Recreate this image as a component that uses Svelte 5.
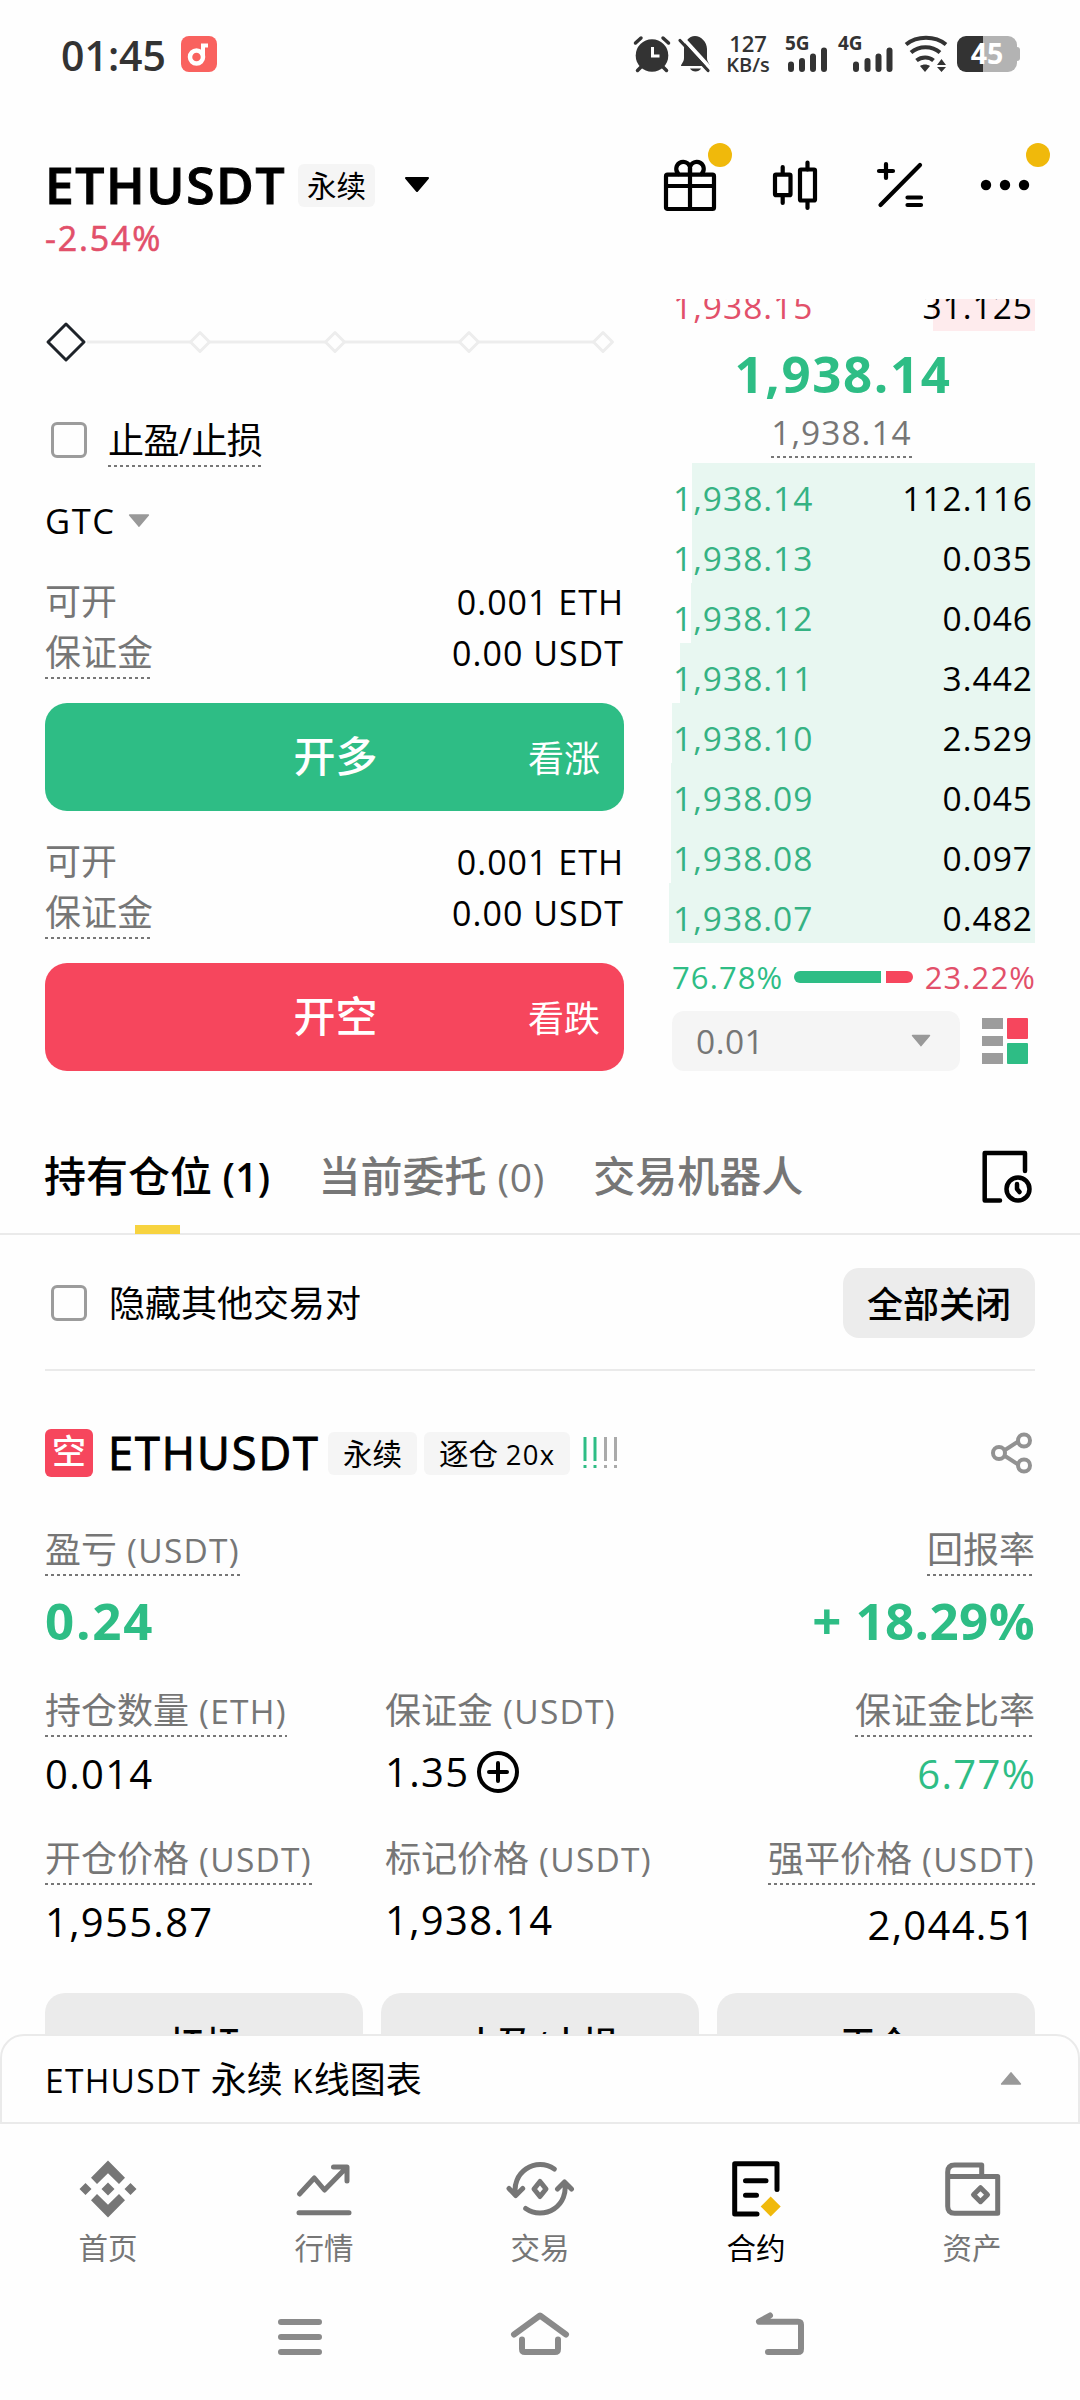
<script>
    const asks = [{ price: '1,938.15', amount: '31.125', depth: 102 }];

    const bids = [
        { price: '1,938.14', amount: '112.116', depth: 343 },
        { price: '1,938.13', amount: '0.035', depth: 343 },
        { price: '1,938.12', amount: '0.046', depth: 344 },
        { price: '1,938.11', amount: '3.442', depth: 355 },
        { price: '1,938.10', amount: '2.529', depth: 363 },
        { price: '1,938.09', amount: '0.045', depth: 364 },
        { price: '1,938.08', amount: '0.097', depth: 364 },
        { price: '1,938.07', amount: '0.482', depth: 366 }
    ];

    const sides = [
        { type: 'long', title: '开多', hint: '看涨', available: '0.001 ETH', margin: '0.00 USDT' },
        { type: 'short', title: '开空', hint: '看跌', available: '0.001 ETH', margin: '0.00 USDT' }
    ];

    const tabs = [
        { name: '持有仓位', count: '(1)' },
        { name: '当前委托', count: '(0)' },
        { name: '交易机器人', count: '' }
    ];

    const actions = ['杠杆', '止盈/止损', '平仓'];
    const sliderStops = [155, 290, 424, 558];
    const ratio = { buy: 76.78, sell: 23.22 };
</script>

{#snippet caret(cls)}
    <svg class="caret {cls}" viewBox="0 0 26 16"><path d="M2 1h22l-11 13z" stroke-width="2" stroke-linejoin="round" /></svg>
{/snippet}

{#snippet label(text, unit, dotted)}
    <span class="label" class:dotted>{text}{#if unit}<span class="en">&nbsp;({unit})</span>{/if}</span>
{/snippet}

{#snippet bookRow(row, side)}
    <div class="book-row {side}">
        <div class="depth" style="width: {row.depth}px"></div>
        <span class="price">{row.price}</span>
        <span class="amount">{row.amount}</span>
    </div>
{/snippet}

<div class="screen">
    <div class="status">
        <span class="time">01:45</span>
        <svg class="app-badge" width="36" height="36" viewBox="0 0 36 36">
            <rect width="36" height="36" rx="8" fill="#f9625f" />
            <circle cx="15.500" cy="21" r="6.500" fill="none" stroke="#fff" stroke-width="4.500" />
            <path d="M22 21V9.500h5" fill="none" stroke="#fff" stroke-width="4" />
        </svg>
        <div class="status-icons">
            <svg width="36" height="36" viewBox="0 0 36 36">
                <path d="M8 30l-4.500 4.500M28 30l4.500 4.500M1.500 7l5.500-5M34.500 7l-5.500-5" stroke="#333" stroke-width="3.500" stroke-linecap="round" />
                <circle cx="18" cy="19.500" r="16.300" fill="#333" />
                <path d="M18.500 11v9h7" fill="none" stroke="#fff" stroke-width="3" />
            </svg>
            <svg class="bell" width="34" height="36" viewBox="0 0 34 36">
                <path d="M3 30c0-2 3-4 3-8v-9c0-7 5-13 11-13s12 6 12 13v9c0 4 3 6 3 8z" fill="#333" />
                <path d="M12 32.500h11c-2 4-9 4-11 0z" fill="#333" />
                <path d="M4 1l30 33" stroke="#fff" stroke-width="4" />
                <path d="M2 4.500l28 30" stroke="#333" stroke-width="3.200" stroke-linecap="round" />
            </svg>
            <div class="speed"><span>127</span><span>KB/s</span></div>
            <svg class="signal" width="43" height="36" viewBox="0 0 43 36">
                <text x="0" y="14">5G</text>
                <path d="M6 28.500v4.500M17 25v8M28 20.500v12.500M39 14.500v18.500" />
            </svg>
            <svg class="signal second" width="56" height="36" viewBox="0 0 56 36">
                <text x="0" y="14">4G</text>
                <path d="M18 28.500v4.500M29.500 25v8M40.500 20.500v12.500M51.500 14.500v18.500" />
            </svg>
            <svg class="wifi" width="46" height="36" viewBox="0 0 46 36">
                <path d="M3 8.500c11-9 29-9 40 0M8 16.500c8-7 21-7 29 0M13.500 24.500c5-4 12.500-4 17 0" fill="none" stroke="#333" stroke-width="4" />
                <path d="M17 30c3-2 7-2 10 0l-5 6zM34 29l4.500-6 4.500 6zM34 31h9l-4.500 5z" fill="#333" />
            </svg>
            <div class="battery">45</div>
        </div>
    </div>

    <header>
        <div class="pair">
            <div class="pair-line">
                <h1>ETHUSDT</h1>
                <span class="tag">永续</span>
                {@render caret('black')}
            </div>
            <div class="change">-2.54%</div>
        </div>
        <div class="tools">
            <div class="tool alert">
                <svg viewBox="0 0 56 56">
                    <rect x="4" y="17.700" width="48" height="34.300" rx="1.500" />
                    <path d="M4 29h48M28 11v41" />
                    <path d="M28 17V10a7 7 0 1 0-11.500 7M28 17V10a7 7 0 1 1 11.500 7" />
                </svg>
            </div>
            <div class="tool">
                <svg viewBox="0 0 56 56">
                    <rect x="8" y="17.700" width="15.500" height="20.500" rx="1" />
                    <rect x="33" y="12.500" width="15" height="31" rx="1" />
                    <path d="M15.700 10v7M15.700 39v7M40.500 5.500v7M40.500 44v7" />
                </svg>
            </div>
            <div class="tool">
                <svg viewBox="0 0 56 56"><path d="M8.500 48L48 8M7 14h14M14 7v14M35.500 40.500H49M35.500 48H49" /></svg>
            </div>
            <div class="tool alert">
                <svg viewBox="0 0 56 56" class="solid"><circle cx="9" cy="28" r="5.200" /><circle cx="28" cy="28" r="5.200" /><circle cx="47" cy="28" r="5.200" /></svg>
            </div>
        </div>
    </header>

    <section class="trade">
        <div class="order-form">
            <svg class="slider" width="579" height="86" viewBox="0 0 579 86">
                <path d="M42 43h516" stroke="#ededed" stroke-width="3" />
                {#each sliderStops as x}
                    <path d="M{x} 33.500l9.500 9.500l-9.500 9.500l-9.500-9.500z" fill="#fefefe" stroke="#ededed" stroke-width="3" stroke-linejoin="round" />
                {/each}
                <path d="M21 25l18 18l-18 18l-18-18z" fill="#fefefe" stroke="#1e2329" stroke-width="3" stroke-linejoin="round" />
            </svg>
            <div class="check-row">
                <span class="checkbox"></span>
                <span class="label dotted dark">止盈/止损</span>
            </div>
            <div class="tif">GTC {@render caret('small')}</div>

            {#each sides as side}
                <div class="side {side.type}">
                    <div class="info"><span class="plain">可开</span><b>{side.available}</b></div>
                    <div class="info"><span class="label dotted">保证金</span><b>{side.margin}</b></div>
                    <button class="order">
                        <span></span>
                        <span class="order-title">{side.title}</span>
                        <span class="order-hint">{side.hint}</span>
                    </button>
                </div>
            {/each}
        </div>

        <div class="book">
            <div class="asks">
                {#each asks as row}
                    {@render bookRow(row, 'ask')}
                {/each}
            </div>
            <div class="last">1,938.14</div>
            <div class="mark">1,938.14</div>
            {#each bids as row}
                {@render bookRow(row, 'bid')}
            {/each}
            <div class="ratio">
                <span class="up">{ratio.buy}%</span>
                <div class="ratio-bar">
                    <i class="buy" style="flex-grow: {ratio.buy}"></i>
                    <i class="sell" style="flex-grow: {ratio.sell}"></i>
                </div>
                <span class="down">{ratio.sell}%</span>
            </div>
            <div class="book-footer">
                <div class="step">0.01 {@render caret('tiny')}</div>
                <svg width="47" height="47" viewBox="0 0 47 47">
                    <path d="M0 0h21v11H0zM0 18h21v10H0zM0 35h21v11H0z" fill="#9c9c9c" />
                    <rect x="25" width="21" height="21" rx="1" fill="#f6465d" />
                    <rect x="25" y="25" width="21" height="21" rx="1" fill="#2ebd85" />
                </svg>
            </div>
        </div>
    </section>

    <nav class="tabs">
        {#each tabs as tab, i}
            <div class="tab" class:active={i === 0}>
                <span>{tab.name}{#if tab.count}<span class="en">&nbsp;{tab.count}</span>{/if}</span>
            </div>
        {/each}
        <svg class="history" width="56" height="56" viewBox="0 0 56 56">
            <path d="M46 22V4H5.700v47.500H21" />
            <circle cx="39" cy="40" r="11.500" />
            <path d="M38 35v5l2.500 3" />
        </svg>
    </nav>

    <div class="filter">
        <span class="checkbox"></span>
        <span class="filter-text">隐藏其他交易对</span>
        <button class="close-all">全部关闭</button>
    </div>

    <section class="position">
        <div class="position-head">
            <span class="badge">空</span>
            <h2>ETHUSDT</h2>
            <span class="tag">永续</span>
            <span class="tag">逐仓 <span class="en">20x</span></span>
            <svg class="risk" width="36" height="34" viewBox="0 0 36 34">
                <path d="M2 1v24M2 29v3M12 1v24M12 29v3" stroke="#2ebd85" stroke-width="3" />
                <path d="M22.500 1v24M22.500 29v3M32.500 1v24M32.500 29v3" stroke="#aaa" stroke-width="3" />
            </svg>
            <svg class="share" width="44" height="44" viewBox="0 0 44 44">
                <path d="M14 19l14-9M14 25l14 9" />
                <circle cx="8" cy="22" r="6" />
                <circle cx="33" cy="9.500" r="6" />
                <circle cx="33" cy="34.500" r="6" />
            </svg>
        </div>

        <div class="stats first">
            <div class="stat">{@render label('盈亏', 'USDT', true)}<strong class="pnl">0.24</strong></div>
            <div class="stat"></div>
            <div class="stat end">{@render label('回报率', '', true)}<strong>+ 18.29%</strong></div>
        </div>
        <div class="stats">
            <div class="stat">{@render label('持仓数量', 'ETH', true)}<em>0.014</em></div>
            <div class="stat mid">
                {@render label('保证金', 'USDT', false)}
                <em>1.35
                    <svg width="42" height="42" viewBox="0 0 42 42"><circle cx="21" cy="21" r="19" /><path d="M21 12v18M12 21h18" /></svg>
                </em>
            </div>
            <div class="stat end">{@render label('保证金比率', '', true)}<em class="up">6.77%</em></div>
        </div>
        <div class="stats">
            <div class="stat">{@render label('开仓价格', 'USDT', true)}<em>1,955.87</em></div>
            <div class="stat mid">{@render label('标记价格', 'USDT', false)}<em>1,938.14</em></div>
            <div class="stat end liq">{@render label('强平价格', 'USDT', true)}<em>2,044.51</em></div>
        </div>

        <div class="actions">
            {#each actions as action}
                <button>{action}</button>
            {/each}
        </div>
    </section>

    <div class="sheet">
        <span><span class="en">ETHUSDT</span> 永续 <span class="en">K</span>线图表</span>
        {@render caret('small flip')}
    </div>

    <nav class="bottom">
        <div class="item">
            <svg viewBox="0 0 60 60" class="solid">
                <path d="M30 1.500L47 18.700L41 25L30 14.300L19 25L13 18.700zM30 58.500L47 41.300L41 35L30 45.700L19 35L13 41.300z" />
                <path d="M30 23.500l6.500 6.500l-6.500 6.500l-6.500-6.500zM7.500 24l6 6l-6 6l-6-6zM52.500 24l6 6l-6 6l-6-6z" />
            </svg>
            <span>首页</span>
        </div>
        <div class="item">
            <svg viewBox="0 0 60 60"><path d="M5.500 35L20.300 19L30.500 31L52 9M39.500 8H53V22M5 53.700H55" /></svg>
            <span>行情</span>
        </div>
        <div class="item">
            <svg viewBox="0 0 60 60">
                <path d="M44.300 10A25 25 0 0 0 5.700 36M-1 29.500l6.700 7l7-7M15.700 49.500A25 25 0 0 0 54.500 23.500M47.500 30l7-7l7 7" />
                <path d="M30 22.500l6 7.500l-6 7.500l-6-7.500z" />
            </svg>
            <span>交易</span>
        </div>
        <div class="item current">
            <svg viewBox="0 0 60 60">
                <path d="M51 30.500V4.700H8.700V55H31M19.500 21.700H40M19.500 36.300H30.500" />
                <path class="gem" d="M44.700 37.500l10 10l-10 10l-10-10z" />
            </svg>
            <span>合约</span>
        </div>
        <div class="item">
            <svg viewBox="0 0 60 60">
                <path d="M5.700 17.500V13q0-7 7-7h27v11M5.700 17.500h50v36.800h-43q-7 0-7-7z" />
                <path d="M38.500 28.700l7 7l-7 7l-7-7z" />
            </svg>
            <span>资产</span>
        </div>
    </nav>

    <div class="system">
        <svg viewBox="0 0 60 50"><path d="M11 12h38M11 27h38M11 42h38" /></svg>
        <svg viewBox="0 0 60 50"><path d="M4 24.500L30 5.500L56 24.500M12 29.500V39q0 3 3 3h30q3 0 3-3V29.500" /></svg>
        <svg viewBox="0 0 60 50"><path d="M20 5.500L9 11.700H48q3 0 3 3V39q0 3-3 3H18" /></svg>
    </div>
</div>

<style>
    :global(body) {
        background: #fefefe;
    }

    .screen {
        width: 1080px;
        height: 2400px;
        overflow: hidden;
        display: flex;
        flex-direction: column;
        background: #fefefe;
        color: #000;
        font-family: "Open Sans", "Noto Sans CJK SC", sans-serif;
        font-size: 36px;
    }

    .screen * {
        box-sizing: border-box;
    }

    svg {
        display: block;
        flex: none;
        overflow: visible;
    }

    h1, h2 {
        margin: 0;
    }

    em {
        font-style: normal;
    }

    button {
        border: none;
        padding: 0;
        font-family: inherit;
    }

    .en {
        font-size: 0.93em;
        letter-spacing: 1.3px;
    }

    .up {
        color: #2ebd85;
    }

    .down {
        color: #e2506a;
    }

    .caret {
        width: 26px;
        height: 16px;
        fill: #999;
        stroke: #999;
    }

    .caret.black {
        fill: #000;
        stroke: #000;
        margin-left: 29px;
    }

    .caret.small {
        width: 22px;
        height: 14px;
    }

    .caret.tiny {
        width: 20px;
    }

    .caret.flip {
        transform: rotate(180deg);
    }

    /* status bar */
    .status {
        height: 108px;
        flex: none;
        display: flex;
        align-items: center;
        padding: 0 60px 0 61px;
        color: #333;
    }

    .time {
        font-size: 41px;
        font-weight: 600;
        line-height: 52px;
        width: 120px;
        padding-top: 2px;
    }

    .status-icons {
        margin-left: auto;
        display: flex;
        align-items: center;
    }

    .bell {
        margin-left: 8px;
    }

    .speed {
        display: flex;
        flex-direction: column;
        align-items: center;
        width: 42px;
        margin: 0 16px 0 15px;
        font-size: 22px;
        font-weight: 600;
        line-height: 22px;
    }

    .speed span:last-child {
        font-size: 20px;
    }

    .signal text {
        font-family: "Open Sans", sans-serif;
        font-size: 19px;
        font-weight: 700;
        fill: #333;
    }

    .signal path {
        stroke: #333;
        stroke-width: 6;
        stroke-linecap: round;
    }

    .signal.second {
        margin-left: 10px;
    }

    .wifi {
        margin: 0 8px 0 9px;
    }

    .battery {
        position: relative;
        width: 60px;
        height: 36px;
        margin-right: 3px;
        border-radius: 9px;
        background: linear-gradient(90deg, #333 44%, #b3b3b3 44%);
        color: #fff;
        font-size: 28.5px;
        font-weight: 700;
        line-height: 35px;
        text-align: center;
    }

    .battery::after {
        content: "";
        position: absolute;
        right: -3px;
        top: 11px;
        width: 3px;
        height: 14px;
        border-radius: 0 3px 3px 0;
        background: #b3b3b3;
    }

    /* header */
    header {
        height: 191px;
        flex: none;
        display: flex;
        justify-content: space-between;
        padding: 45px 47px 0 45px;
    }

    .pair-line {
        display: flex;
        align-items: center;
        height: 64px;
    }

    h1 {
        font-size: 51.5px;
        font-weight: 600;
        line-height: 62px;
        padding-bottom: 2px;
        width: 253px;
        letter-spacing: 1.6px;
        -webkit-text-stroke: 1px #000;
    }

    .tag {
        height: 43px;
        padding: 0 9px;
        border-radius: 6px;
        background: #f5f5f5;
        font-size: 29.5px;
        line-height: 43px;
        white-space: nowrap;
    }

    .change {
        color: #e2506a;
        font-size: 34px;
        font-weight: 500;
        line-height: 42px;
        letter-spacing: 1.8px;
        -webkit-text-stroke: 0.6px #e2506a;
    }

    .tools {
        display: flex;
        gap: 49px;
        padding-top: 4px;
    }

    .tool {
        position: relative;
        width: 56px;
        height: 56px;
    }

    .tool svg {
        fill: none;
        stroke: #000;
        stroke-width: 4.2;
        stroke-linecap: round;
        stroke-linejoin: round;
    }

    .tool svg.solid {
        fill: #000;
        stroke: none;
    }

    .tool.alert::after {
        content: "";
        position: absolute;
        right: -14px;
        top: -14px;
        width: 24px;
        height: 24px;
        border-radius: 50%;
        background: #f0b90b;
    }

    .tool.alert:last-child::after {
        right: -17px;
    }

    /* order form and order book */
    .trade {
        flex: none;
        display: grid;
        grid-template-columns: 579px 366px;
        gap: 45px;
        height: 772px;
        padding: 0 45px;
    }

    .check-row {
        display: flex;
        align-items: center;
        height: 110px;
        padding-left: 6px;
        gap: 21px;
    }

    .checkbox {
        width: 36px;
        height: 36px;
        border: 3px solid #9c9c9c;
        border-radius: 6px;
        flex: none;
    }

    .label {
        color: #767676;
        line-height: 48px;
        padding-bottom: 2px;
        white-space: nowrap;
    }

    .label.dark {
        color: #000;
        line-height: 50px;
        padding: 3px 0 1px;
        letter-spacing: -0.6px;
    }

    .dotted {
        background: repeating-linear-gradient(90deg, #777 0 3px, transparent 3px 6px) bottom / 100% 2px no-repeat;
    }

    .tif {
        display: flex;
        align-items: center;
        gap: 12px;
        height: 52px;
        padding-bottom: 1px;
        font-size: 34.5px;
        letter-spacing: 1.6px;
        margin-bottom: 30px;
    }

    .side {
        margin-bottom: 26px;
    }

    .info {
        display: flex;
        align-items: center;
        justify-content: space-between;
        height: 50px;
        color: #767676;
    }

    .info + .info {
        height: 52px;
    }

    .info .plain {
        padding-bottom: 6px;
    }

    .info .label {
        line-height: 51px;
        padding-bottom: 1px;
    }

    .info b {
        color: #000;
        font-size: 34px;
        font-weight: 400;
        letter-spacing: 1px;
        padding-bottom: 1px;
    }

    .order {
        width: 579px;
        height: 108px;
        margin-top: 24px;
        padding: 0 24px 0 26px;
        display: grid;
        grid-template-columns: 1fr auto 1fr;
        align-items: center;
        border-radius: 22px;
        background: #2ebd85;
        color: #fff;
    }

    .short .order {
        background: #f6465d;
    }

    .order-title {
        padding-bottom: 7px;
        font-size: 42px;
        font-weight: 500;
    }

    .order-hint {
        padding-bottom: 1px;
        font-size: 36px;
        text-align: right;
    }

    .asks {
        height: 32px;
        overflow: hidden;
        display: flex;
        flex-direction: column;
        justify-content: flex-end;
    }

    .book-row {
        position: relative;
        display: flex;
        justify-content: space-between;
        flex: none;
        height: 60px;
        padding: 10px 3px 0 4px;
        font-size: 33.5px;
        line-height: 50px;
        letter-spacing: 1px;
    }

    .depth {
        position: absolute;
        right: 0;
        top: 0;
        height: 60px;
        background: #e8f7f1;
    }

    .ask .depth {
        background: #feebed;
    }

    .price, .amount {
        position: relative;
    }

    .amount {
        margin-right: -1px;
    }

    .bid .price {
        color: #35b283;
    }

    .ask .price {
        color: #e2506a;
    }

    .last {
        color: #2ebd85;
        font-size: 51px;
        font-weight: 700;
        line-height: 84px;
        letter-spacing: 1.6px;
        text-align: center;
        padding-right: 18px;
        padding-bottom: 2px;
    }

    .mark {
        width: 141px;
        margin: 0 0 5px 102px;
        padding-bottom: 11px;
        color: #767676;
        font-size: 33.5px;
        line-height: 30px;
        letter-spacing: 1px;
        text-align: center;
        background: repeating-linear-gradient(90deg, #777 0 3px, transparent 3px 6px) bottom / 100% 2px no-repeat;
    }

    .ratio {
        display: flex;
        align-items: center;
        height: 68px;
        padding-left: 3px;
        font-size: 31px;
        letter-spacing: 1.1px;
    }

    .ratio .down {
        margin-right: -1px;
    }

    .ratio-bar {
        flex: 1;
        display: flex;
        gap: 5px;
        height: 12px;
        margin: 0 12px 0 11px;
    }

    .ratio-bar i {
        flex-basis: 0;
    }

    .buy {
        background: #2ebd85;
        border-radius: 6px 0 0 6px;
    }

    .sell {
        background: #f6465d;
        border-radius: 0 6px 6px 0;
    }

    .book-footer {
        display: flex;
        align-items: center;
        justify-content: space-between;
        padding: 0 6px 0 3px;
    }

    .step {
        display: flex;
        align-items: center;
        justify-content: space-between;
        width: 288px;
        height: 60px;
        padding: 0 29px 0 24px;
        border-radius: 12px;
        background: #f5f5f5;
        color: #767676;
        font-size: 33.5px;
        letter-spacing: 0.5px;
    }

    /* tabs */
    .tabs {
        flex: none;
        display: flex;
        height: 164px;
        padding: 80px 45px 0 44px;
        border-bottom: 2px solid #eaeaea;
    }

    .tab {
        margin-right: 48px;
        color: #767676;
        font-size: 42px;
        font-weight: 500;
        line-height: 50px;
        white-space: nowrap;
    }

    .tab .en {
        letter-spacing: 0.8px;
    }

    .tab.active {
        color: #000;
    }

    .tab.active .en {
        font-weight: 600;
        letter-spacing: 0.3px;
    }

    .tab.active::after {
        content: "";
        display: block;
        width: 45px;
        height: 9px;
        margin: 23px auto 0;
        background: #f7d33f;
    }

    .history {
        margin: -2px 0 0 auto;
        fill: none;
        stroke: #000;
        stroke-width: 4.5;
        stroke-linecap: round;
        stroke-linejoin: round;
    }

    .filter {
        flex: none;
        display: flex;
        align-items: center;
        height: 136px;
        margin: 0 45px;
        padding: 2px 0 0 6px;
        border-bottom: 2px solid #eaeaea;
    }

    .filter-text {
        margin-left: 22px;
        padding-top: 1px;
        line-height: 50px;
    }

    .close-all {
        width: 192px;
        height: 70px;
        margin-left: auto;
        padding-bottom: 2px;
        border-radius: 16px;
        background: #ececec;
        color: #000;
        font-size: 36px;
        font-weight: 500;
    }

    /* position card */
    .position {
        flex: none;
        height: 663px;
        overflow: hidden;
        padding: 0 45px;
    }

    .position-head {
        display: flex;
        align-items: center;
        height: 155px;
        padding-top: 9px;
    }

    .badge {
        width: 48px;
        height: 48px;
        border-radius: 6px;
        background: #f6465d;
        color: #fff;
        font-size: 34px;
        font-weight: 500;
        line-height: 45px;
        text-align: center;
    }

    h2 {
        width: 220px;
        margin-left: 15px;
        font-size: 45px;
        font-weight: 500;
        line-height: 56px;
        letter-spacing: 2px;
        -webkit-text-stroke: 1px #000;
    }

    .position-head .tag {
        padding: 0 15px;
        margin-right: 7px;
        font-size: 29.5px;
    }

    .risk {
        margin-left: 6px;
    }

    .share {
        margin-left: auto;
        fill: none;
        stroke: #929292;
        stroke-width: 4;
    }

    .stats {
        display: grid;
        grid-template-columns: 340px 1fr auto;
        margin-top: 36px;
    }

    .stats.first {
        margin: 0 0 -1px;
    }

    .stat {
        display: flex;
        flex-direction: column;
        align-items: flex-start;
    }

    .stat.end {
        align-items: flex-end;
    }

    .stat strong {
        margin-top: 14px;
        padding-bottom: 2px;
        color: #2ebd85;
        font-size: 51px;
        line-height: 60px;
        letter-spacing: 0.4px;
    }

    .stat .pnl {
        letter-spacing: 1.8px;
    }

    .stat em {
        display: flex;
        align-items: center;
        gap: 8px;
        margin-top: 12px;
        font-size: 40px;
        line-height: 50px;
        letter-spacing: 1.3px;
    }

    .stat.end em {
        margin-right: -1px;
    }

    .mid em {
        margin-top: 10px;
    }

    .liq em {
        margin: 15px 0 -3px;
    }

    .stat em svg {
        fill: none;
        stroke: #000;
        stroke-width: 4;
        stroke-linecap: round;
    }

    .actions {
        display: grid;
        grid-template-columns: repeat(3, 1fr);
        gap: 18px;
        margin-top: 46px;
    }

    .actions button {
        height: 98px;
        border-radius: 20px;
        background: #ebebeb;
        color: #000;
        font-size: 36px;
        font-weight: 500;
    }

    .sheet {
        flex: none;
        display: flex;
        align-items: center;
        justify-content: space-between;
        height: 90px;
        padding: 0 56px 3px 43px;
        border: 2px solid #eaeaea;
        border-radius: 24px 24px 0 0;
    }

    /* bottom navigation */
    .bottom {
        flex: none;
        display: flex;
        height: 156px;
        padding-top: 35px;
    }

    .item {
        width: 216px;
        display: flex;
        flex-direction: column;
        align-items: center;
        gap: 9px;
        color: #767676;
        font-size: 29.5px;
        line-height: 40px;
    }

    .item svg {
        width: 60px;
        height: 60px;
        fill: none;
        stroke: currentColor;
        stroke-width: 5;
        stroke-linecap: round;
        stroke-linejoin: round;
    }

    .item svg.solid {
        fill: currentColor;
        stroke: none;
    }

    .item .gem {
        fill: #f0b90b;
        stroke: none;
    }

    .item.current {
        color: #000;
    }

    .system {
        display: flex;
        justify-content: center;
        gap: 180px;
        padding-top: 30px;
    }

    .system svg {
        width: 60px;
        height: 50px;
        fill: none;
        stroke: #8a8a8a;
        stroke-width: 6;
        stroke-linecap: round;
        stroke-linejoin: round;
    }
</style>
